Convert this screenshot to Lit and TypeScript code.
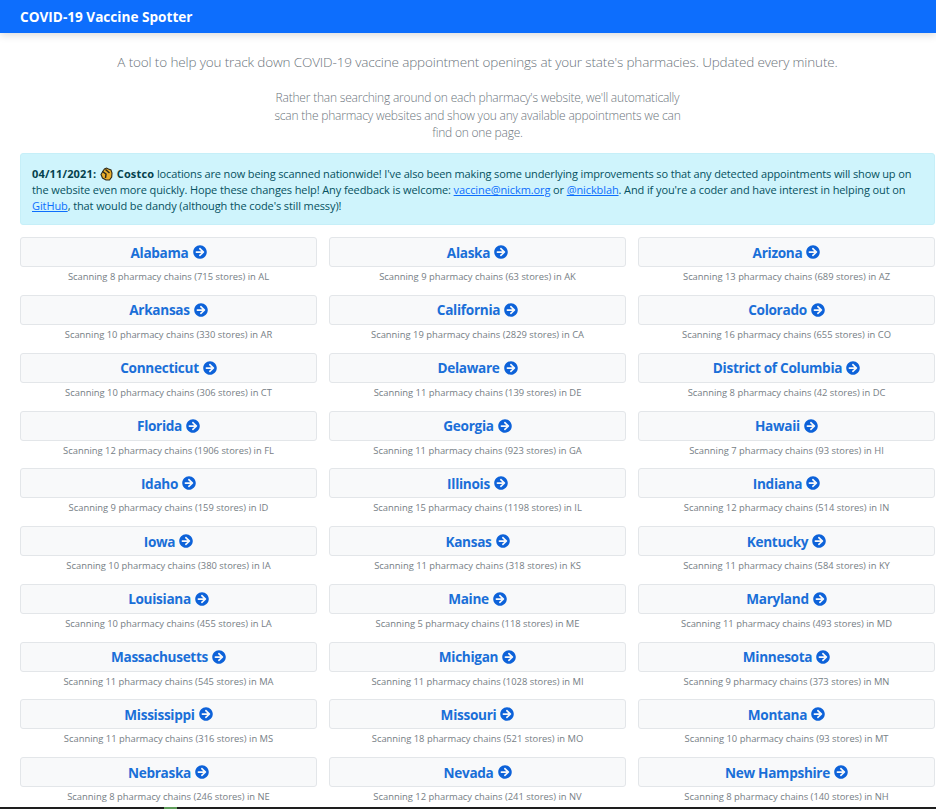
import { LitElement, html, css } from "lit";
import { customElement } from "lit/decorators.js";

const STATES: [string, number, number, string][] = [
  ["Alabama", 8, 715, "AL"], ["Alaska", 9, 63, "AK"], ["Arizona", 13, 689, "AZ"],
  ["Arkansas", 10, 330, "AR"], ["California", 19, 2829, "CA"], ["Colorado", 16, 655, "CO"],
  ["Connecticut", 10, 306, "CT"], ["Delaware", 11, 139, "DE"], ["District of Columbia", 8, 42, "DC"],
  ["Florida", 12, 1906, "FL"], ["Georgia", 11, 923, "GA"], ["Hawaii", 7, 93, "HI"],
  ["Idaho", 9, 159, "ID"], ["Illinois", 15, 1198, "IL"], ["Indiana", 12, 514, "IN"],
  ["Iowa", 10, 380, "IA"], ["Kansas", 11, 318, "KS"], ["Kentucky", 11, 584, "KY"],
  ["Louisiana", 10, 455, "LA"], ["Maine", 5, 118, "ME"], ["Maryland", 11, 493, "MD"],
  ["Massachusetts", 11, 545, "MA"], ["Michigan", 11, 1028, "MI"], ["Minnesota", 9, 373, "MN"],
  ["Mississippi", 11, 316, "MS"], ["Missouri", 18, 521, "MO"], ["Montana", 10, 93, "MT"],
  ["Nebraska", 8, 246, "NE"], ["Nevada", 12, 241, "NV"], ["New Hampshire", 8, 140, "NH"],
];

@customElement("app-root")
export class AppRoot extends LitElement {
  static styles = css`
    :host {
      display: block;
      height: 809px;
      overflow: hidden;
      position: relative;
      background: #fff;
      font-family: "Open Sans", "Noto Sans", sans-serif;
      color: #212529;
    }
    .nav {
      height: 33px;
      background: #0d6efd;
      box-shadow: 0 2px 8px rgba(0, 0, 0, 0.15);
      display: flex;
      align-items: center;
      padding-left: 20px;
      color: #fff;
      font-weight: 700;
      font-size: 13.6px;
    }
    .main { padding: 0 1px 0 20px; }
    .lead {
      margin: 20px 0 0;
      text-align: center;
      font-weight: 300;
      font-size: 13.5px;
      line-height: 19px;
      color: #6c757d;
      letter-spacing: -0.14px;
      white-space: nowrap;
    }
    .sub {
      margin: 17px 0 0;
      text-align: center;
      font-weight: 300;
      font-size: 12px;
      line-height: 17.7px;
      color: #6c757d;
      letter-spacing: -0.2px;
      white-space: nowrap;
    }
    .alert {
      margin-top: 11px;
      height: 72px;
      box-sizing: border-box;
      padding: 12px 11px;
      background: #cff4fc;
      border: 1px solid #c6eff8;
      border-radius: 3px;
      color: #055160;
      font-size: 11px;
      line-height: 16px;
      letter-spacing: -0.105px;
      white-space: nowrap;
    }
    .alert b { font-weight: 700; color: #04414d; letter-spacing: 0.15px; }
    .alert a { color: #0d6efd; text-decoration: underline; }
    .tight { letter-spacing: -0.136px; }
    .clap { width: 13px; height: 14px; vertical-align: -3px; margin: 0 1px; }
    .grid {
      margin-top: 12px;
      display: grid;
      grid-template-columns: repeat(3, 297px);
      column-gap: 12px;
      row-gap: 6.8px;
    }
    .cell { text-align: center; height: 51px; }
    .btn {
      height: 30px;
      box-sizing: border-box;
      background: #f8f9fa;
      border: 1px solid #e3e6e9;
      border-radius: 3px;
      display: flex;
      align-items: center;
      justify-content: center;
      gap: 4px;
      color: #1a6fd8;
      font-weight: 700;
      font-size: 13.6px;
      letter-spacing: -0.3px;
    }
    .btn svg { width: 14px; height: 14px; fill: #0d62d9; }
    .note {
      margin-top: 3px;
      font-size: 9.4px;
      line-height: 13px;
      color: #767e85;
      white-space: nowrap;
    }
    .strip {
      position: absolute;
      left: 0;
      right: 0;
      bottom: 0;
      height: 2px;
      background: #1e1e1e;
    }
    .strip i {
      position: absolute;
      left: 164px;
      top: 0;
      width: 13px;
      height: 2px;
      background: #5f9c5a;
    }
  `;

  render() {
    return html`
      <div class="nav">COVID-19 Vaccine Spotter</div>
      <div class="main">
        <p class="lead">A tool to help you track down COVID-19 vaccine appointment openings at your state's pharmacies. Updated every minute.</p>
        <p class="sub">Rather than searching around on each pharmacy's website, we'll automatically<br />scan the pharmacy websites and show you any available appointments we can<br />find on one page.</p>
        <div class="alert">
          <b>04/11/2021:</b>
          <svg class="clap" viewBox="0 0 13 14" aria-hidden="true">
            <path fill="#e9ac2a" stroke="#2e2a1c" stroke-width="1.1" d="M3 4 4.5 2 6.5 1l2 1 2.5 1 1 3-.3 4L9.500 13H6L2.500 11 1 7.500z" />
            <path fill="none" stroke="#2e2a1c" stroke-width="1.5" d="M2.500 4.500 6 7l-.5 4M5.500 2.500 9.500 6" />
          </svg>
          <b>Costco</b> <span class="tight">locations are now being scanned nationwide! I've also been making some underlying improvements so that any detected appointments will show up on</span><br />the website even more quickly. Hope these changes help! Any feedback is welcome: <a>vaccine@nickm.org</a> or <a>@nickblah</a>. And if you're a coder and have interest in helping out on<br /><a>GitHub</a>, that would be dandy (although the code's still messy)!
        </div>
        <div class="grid">
          ${STATES.map(
            ([name, chains, stores, code]) => html`
              <div class="cell">
                <div class="btn">
                  <span>${name}</span>
                  <svg viewBox="0 0 512 512" aria-hidden="true"><path fill-rule="evenodd" d="M256 8c137 0 248 111 248 248S393 504 256 504 8 393 8 256 119 8 256 8zM227.100 151.600l75.500 72.400H120c-13.300 0-24 10.700-24 24v16c0 13.300 10.700 24 24 24h182.600l-75.500 72.400c-9.700 9.300-9.900 24.800-.4 34.300l11 10.900c9.400 9.400 24.600 9.400 33.900 0L404.300 273c9.400-9.400 9.400-24.600 0-33.900L271.600 106.400c-9.400-9.400-24.600-9.400-33.900 0l-11 10.900c-9.500 9.600-9.300 25 .4 34.300z" /></svg>
                </div>
                <div class="note">Scanning ${chains} pharmacy chains (${stores} stores) in ${code}</div>
              </div>
            `
          )}
        </div>
      </div>
      <div class="strip"><i></i></div>
    `;
  }
}
